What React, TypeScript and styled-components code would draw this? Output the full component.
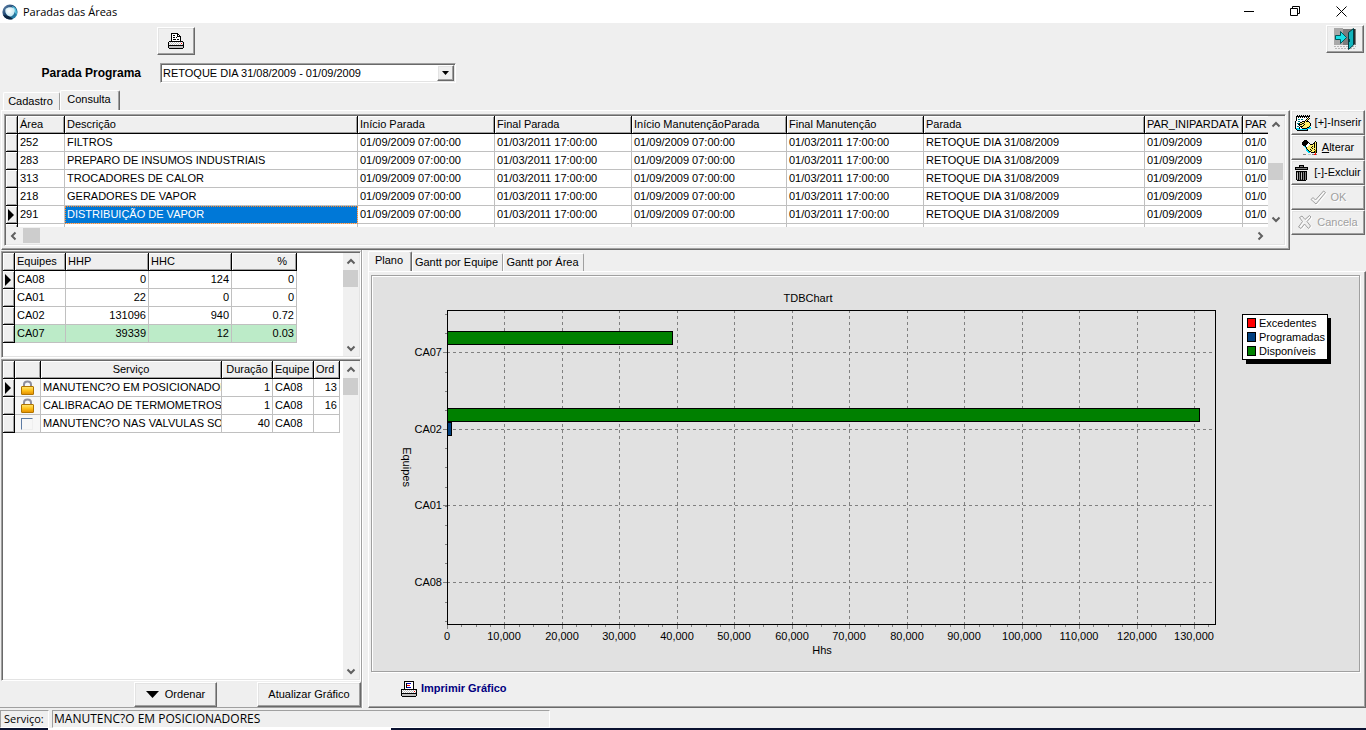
import React from "react";
import styled, { createGlobalStyle, css } from "styled-components";

const face = "#efefef";
const shade = "#a0a0a0";
const dark = "#696969";
const light = "#e3e3e3";
const line = "#c0c0c0";

const GlobalStyle = createGlobalStyle`
  * { box-sizing: border-box; }
  body {
    margin: 0;
    background: ${face};
    color: #000;
    font: 11px/13px "Liberation Sans", Arial, sans-serif;
  }
  button, select, input { font: inherit; color: inherit; margin: 0; padding: 0; }
  svg { flex: none; }
`;

const raised = css`
  border: 1px solid;
  border-color: #fff ${dark} ${dark} #fff;
  box-shadow: inset -1px -1px 0 ${shade}, inset 1px 1px 0 ${light};
`;

const sunken = css`
  border: 1px solid;
  border-color: ${shade} #fff #fff ${shade};
  box-shadow: inset 1px 1px 0 ${dark}, inset -1px -1px 0 ${light};
  padding: 1px;
`;

/* ---------- window frame ---------- */

const Window = styled.div`
  display: flex;
  flex-direction: column;
  min-height: 100vh;
  background: ${face};
`;

const TitleBar = styled.header`
  display: flex;
  align-items: center;
  height: 23px;
  padding: 0 2px;
  background: #fff;
`;

const Title = styled.h1`
  flex: 1;
  margin: 0 0 0 5px;
  font: 11px/16px "Open Sans", "Noto Sans", sans-serif;
`;

const CaptionButton = styled.button`
  display: flex;
  align-items: center;
  justify-content: center;
  width: 46px;
  height: 21px;
  border: 0;
  background: none;
`;

const Toolbar = styled.div`
  display: flex;
  justify-content: space-between;
  align-items: flex-start;
  height: 67px;
  padding: 2px 2px 0 0;
`;

const ProgramForm = styled.div`
  display: grid;
  grid-template-columns: 141px 299px;
  grid-template-rows: 28px 20px;
  column-gap: 16px;
  row-gap: 8px;
  align-items: center;
  padding-top: 2px;
`;

const ProgramLabel = styled.label`
  font-weight: bold;
  font-size: 12px;
  text-align: right;
  white-space: nowrap;
`;

const RaisedButton = styled.button<{ $w?: number; $gap?: number }>`
  ${raised}
  display: flex;
  align-items: center;
  justify-content: center;
  gap: ${(p) => p.$gap ?? 4}px;
  width: ${(p) => (p.$w ? `${p.$w}px` : "auto")};
  height: 25px;
  background: ${face};
  white-space: nowrap;
`;

const ToolButton = styled(RaisedButton)`
  grid-column: 2;
  width: 38px;
  height: 28px;
`;

const Combo = styled.div`
  ${sunken}
  position: relative;
  height: 20px;
  margin-left: 3px;
  background: #fff;
`;

const ComboSelect = styled.select`
  appearance: none;
  display: block;
  width: 100%;
  height: 16px;
  padding: 0 18px 0 1px;
  border: 0;
  background: transparent;
`;

const ComboArrow = styled.span`
  ${raised}
  position: absolute;
  top: 1px;
  right: 1px;
  display: flex;
  align-items: center;
  justify-content: center;
  width: 17px;
  height: 16px;
  background: ${face};
  pointer-events: none;
`;

/* ---------- tabs ---------- */

const TabStrip = styled.div<{ $left: number }>`
  display: flex;
  align-items: flex-end;
  padding-left: ${(p) => p.$left}px;
`;

const Tab = styled.button<{ $active?: boolean; $w: number }>`
  width: ${(p) => p.$w}px;
  height: ${(p) => (p.$active ? 20 : 18)}px;
  padding: 0 2px ${(p) => (p.$active ? 3 : 0)}px 0;
  border: 1px solid;
  border-color: #fff ${(p) => (p.$active ? dark : shade)} transparent #fff;
  border-bottom: 0;
  border-radius: 2px 2px 0 0;
  box-shadow: ${(p) => (p.$active ? `inset -1px 0 0 ${shade}` : "none")};
  background: ${face};
  white-space: nowrap;
`;

const TabPage = styled.section`
  display: flex;
  flex-direction: column;
  flex: 1;
  min-width: 0;
  border: 1px solid;
  border-color: #fff ${dark} ${dark} #fff;
  box-shadow: inset -1px -1px 0 ${shade};
  padding: 3px 3px 3px 2px;
`;

const UpperArea = styled.div`
  display: flex;
  align-items: flex-start;
  padding-left: 1px;
`;

const ActionColumn = styled.div`
  display: flex;
  flex-direction: column;
  flex: none;
  width: 76px;
  padding: 0 1px;
`;

const ActionButton = styled(RaisedButton)`
  width: 74px;
  &:disabled { color: ${shade}; text-shadow: 1px 1px 0 #fff; }
`;

/* ---------- data grids ---------- */

const GridBox = styled.div<{ $grow?: boolean; $h?: number; $hscroll?: boolean }>`
  ${sunken}
  display: grid;
  grid-template-columns: minmax(0, 1fr) 16px;
  grid-template-rows: minmax(0, 1fr) ${(p) => (p.$hscroll ? "17px" : "")};
  flex: ${(p) => (p.$grow ? 1 : "none")};
  height: ${(p) => (p.$h ? `${p.$h}px` : "auto")};
  background: #fff;
`;

const Viewport = styled.div`
  overflow: hidden;
`;

const Table = styled.table<{ $w: number }>`
  width: ${(p) => p.$w}px;
  table-layout: fixed;
  border-collapse: separate;
  border-spacing: 0;
`;

type Align = "left" | "right" | "center";

const HeadCell = styled.th<{ $align?: Align; $pad?: number }>`
  height: 18px;
  padding: 0 ${(p) => p.$pad ?? 2}px 0 2px;
  overflow: hidden;
  border-right: 1px solid #000;
  border-bottom: 1px solid #000;
  box-shadow: inset 1px 1px 0 #fff, inset -1px -1px 0 ${shade};
  background: ${face};
  font-weight: normal;
  text-align: ${(p) => p.$align ?? "left"};
  white-space: nowrap;
`;

const Cell = styled.td<{ $align?: Align; $tone?: string; $selected?: boolean }>`
  height: 18px;
  padding: 0 ${(p) => (p.$align === "right" ? 2 : 0)}px 0 2px;
  overflow: hidden;
  border-right: 1px solid ${line};
  border-bottom: 1px solid ${line};
  background: ${(p) => (p.$selected ? "#0078d7" : p.$tone ?? "#fff")};
  color: ${(p) => (p.$selected ? "#fff" : "#000")};
  outline: ${(p) => (p.$selected ? "1px dotted #ff8728" : "none")};
  outline-offset: -1px;
  text-align: ${(p) => p.$align ?? "left"};
  white-space: nowrap;
`;

const MarkerCell = styled.td`
  height: 18px;
  padding: 0 0 0 2px;
  border-right: 1px solid #000;
  border-bottom: 1px solid #000;
  box-shadow: inset 1px 1px 0 #fff, inset -1px -1px 0 ${shade};
  background: ${face};
  line-height: 0;
`;

const LockCell = styled(Cell)`
  line-height: 0;
  padding: 0 0 0 6px;
`;

const RowCheck = styled.input`
  appearance: none;
  display: block;
  width: 12px;
  height: 12px;
  border: 1px solid;
  border-color: #5d7ba3 ${face} ${face} #5d7ba3;
  background: #f7f7f7;
`;

const VScroll = styled.div`
  grid-column: 2;
  display: flex;
  flex-direction: column;
  justify-content: space-between;
  background: #f0f0f0;
`;

const HScroll = styled.div`
  grid-row: 2;
  display: flex;
  justify-content: space-between;
  background: #f0f0f0;
`;

const ScrollCorner = styled.div`
  grid-row: 2;
  background: #f0f0f0;
`;

const Track = styled.div<{ $start?: number; $row?: boolean }>`
  flex: 1;
  padding: ${(p) => (p.$row ? "1px" : `${p.$start ?? 0}px 0 0`)};
`;

const Thumb = styled.div<{ $row?: boolean }>`
  width: ${(p) => (p.$row ? "17px" : "15px")};
  height: ${(p) => (p.$row ? "15px" : "17px")};
  background: #cdcdcd;
`;

const ScrollButton = styled.button`
  display: flex;
  align-items: center;
  justify-content: center;
  width: 16px;
  height: 17px;
  border: 0;
  background: none;
`;

/* ---------- lower area ---------- */

const LowerArea = styled.main`
  display: flex;
  flex: 1;
  padding-bottom: 1px;
`;

const TeamPane = styled.div`
  display: flex;
  flex-direction: column;
  flex: none;
  gap: 1px;
  width: 362px;
  padding: 1px 0 0 1px;
  border-right: 1px solid ${shade};
  border-bottom: 1px solid ${shade};
`;

const PaneGrids = styled.div`
  display: flex;
  flex-direction: column;
  flex: 1;
  gap: 1px;
`;

const PaneButtons = styled.div`
  display: flex;
  justify-content: flex-end;
  gap: 40px;
`;

const ChartPane = styled.div`
  display: flex;
  flex-direction: column;
  flex: 1;
  min-width: 0;
  padding: 1px 0 0 5px;
  border-left: 1px solid #fff;
`;

const ChartFrame = styled.div`
  flex: 1;
  border: 1px solid ${shade};
  box-shadow: 1px 1px 0 #fff, inset 1px 1px 0 #fff;
  margin: 0 2px 1px 0;
  padding: 1px 0 0 1px;
  background: #e1e1e1;
`;

const ChartSvg = styled.svg`
  display: block;
  width: 100%;
  height: auto;
  font: 11px "Liberation Sans", Arial, sans-serif;
`;

const ChartFooter = styled.div`
  display: flex;
  align-items: center;
  height: 31px;
  padding-left: 30px;
`;

const LinkButton = styled.button`
  display: flex;
  align-items: center;
  gap: 4px;
  border: 0;
  background: none;
  color: #000080;
  font-weight: bold;
`;

const StatusBar = styled.footer`
  display: flex;
  gap: 3px;
  padding-top: 1px;
`;

const StatusCell = styled.div<{ $w: number; $size: number }>`
  width: ${(p) => p.$w}px;
  height: 18px;
  padding: 0 1px 0 ${(p) => (p.$size === 12 ? 1 : 3)}px;
  border: 1px solid;
  border-color: ${shade} #fff #fff ${shade};
  font: ${(p) => p.$size}px/16px "Open Sans", "Noto Sans", sans-serif;
  white-space: nowrap;
`;

const BottomEdge = styled.div`
  height: 2px;
  background: linear-gradient(to right, #0a1230 48px, #fff 48px, #fff 391px, #0a1230 391px);
`;

/* ---------- icons ---------- */

const palette: Record<string, string> = {
  k: "#000000",
  w: "#ffffff",
  g: "#c0c0c0",
  d: "#808080",
  r: "#ff0000",
  b: "#0000c0",
  c: "#00e0ff",
  t: "#008080",
  y: "#ffee66",
  o: "#a08000",
};

function Sprite({ rows }: { rows: string[] }) {
  const w = Math.max(...rows.map((r) => r.length));
  return (
    <svg width={w} height={rows.length} viewBox={`0 0 ${w} ${rows.length}`} shapeRendering="crispEdges" aria-hidden="true">
      {rows.flatMap((row, y) =>
        [...row].map((ch, x) =>
          palette[ch] ? <rect key={`${x}-${y}`} x={x} y={y} width={1} height={1} fill={palette[ch]} /> : null
        )
      )}
    </svg>
  );
}

const printerRows = [
  "   kkkkkkk      ",
  "   kwwwwwkk     ",
  "   kwkkwwkwk    ",
  "   kwwwwwkkkk   ",
  "   kwkkwkwwwk   ",
  "   kwwwwwwwwk   ",
  "   kwkkkwkkwk   ",
  "   kwwwwwwwwk   ",
  " kkkkkkkkkkkkkk ",
  "kwgwgwgwgwgwgwgk",
  "kgwgwgwgwgwgwrwk",
  "kwgwgwgwgwgwgwgk",
  "kkkkkkkkkkkkkkkk",
  "kggggggggggggggk",
  "kggggggggggggggk",
  " kkkkkkkkkkkkkk ",
];

const chartPrinterRows = [
  "   kkkkkkkkkk   ",
  "   kwwwwwwwwk   ",
  "   kwkbbbbwwk   ",
  "   kwkwwwwwwk   ",
  "   kwkrrrwwwk   ",
  "   kwkwwwwwwk   ",
  "   kwkbbbbwwk   ",
  "   kwwwwwwwwk   ",
  "kkkkkkkkkkkkkkkk",
  "kwgwgwgwgwgwgwgk",
  "kgwgwgwgwgwgwrwk",
  "kwgwgwgwgwgwgwgk",
  "kkkkkkkkkkkkkkkk",
  "kggggggggggggggk",
  "kggggggggggggggk",
  " kkkkkkkkkkkkkk ",
];

const insertRows = [
  "  k k k k k k k ",
  " kkkkkkkkkkkkkk ",
  " kwkwkwkwkwkwkw ",
  " kwwwwwwwwwwkyk ",
  " kwttwttwwwkyk  ",
  " kwwwwwwwwkykw  ",
  "kwwttwwkkkykkk  ",
  "kwwwwkkyykyyyyk ",
  "kwttkyykkyyyyyyk",
  "kwwkkkkyykyyyyyk",
  "kwwwkyyykyyyyyyk",
  "kwttwkkkyyyyyyk ",
  "kwwwkwkyyyyykkcc",
  "kccckwwkkkkkcccc",
  " kcccccccccck   ",
  "  kkkkkkkkkkk   ",
];

const editRows = [
  "  kkk           ",
  " kkkkk       k  ",
  "kkkkkkk     kyk ",
  "kkkkkkwk   kkyk ",
  "kkkkkwwwkkkykyk ",
  " kkkwwwyyyyykyk ",
  "  ckwwyyyykykyk ",
  "   ckyyyykyykyk ",
  "    kyyyyykyyyk ",
  "    ckyykyyykyk ",
  "    cckyykyyyok ",
  "     cckkyyykok ",
  "      cc kkkkok ",
  "             r  ",
  " ddd  ggg ddrrd ",
];

const trashRows = [
  "    kkkkk    ",
  "    kdddk    ",
  "kkkkkkkkkkkkk",
  "kdddddddddddk",
  "kkkkkkkkkkkkk",
  "             ",
  " kkkkkkkkkkk ",
  " kdkdkdkdkdk ",
  " kgkdkgkdkdk ",
  " kgkdkgkdkdk ",
  " kgkdkgkdkdk ",
  " kgkdkgkdkdk ",
  " kgkdkgkdkdk ",
  " kgkdkgkdkdk ",
  " kdkdkdkdkdk ",
  "  kkkkkkkkk  ",
];

function LogoIcon() {
  return (
    <svg width="16" height="16" viewBox="0 0 16 16" aria-hidden="true">
      <defs>
        <linearGradient id="ring" x1="0" y1="0" x2="1" y2="1">
          <stop offset="0" stopColor="#6f8fb4" />
          <stop offset="0.45" stopColor="#1a4470" />
          <stop offset="1" stopColor="#2a9fc4" />
        </linearGradient>
        <radialGradient id="core" cx="0.4" cy="0.4" r="0.7">
          <stop offset="0" stopColor="#ffffff" />
          <stop offset="1" stopColor="#b5e3f0" />
        </radialGradient>
      </defs>
      <circle cx="8" cy="8" r="7.6" fill="url(#ring)" />
      <path d="M1 11 C3 15 8 16.500 11 15 L7 12 Z" fill="#0c2440" />
      <path d="M10 2 C14 3 15.500 7 14.500 11 L12 7 Z" fill="#54c0dd" />
      <path d="M3.500 5 C6 2.500 11 3 12.500 5 C13.500 8 11.500 12 8.500 12.500 C5 12 2.500 9 3.500 5 Z" fill="url(#core)" />
    </svg>
  );
}

function ExitIcon() {
  return (
    <svg width="23" height="22" viewBox="0 0 23 22" aria-hidden="true">
      <rect x="0" y="0" width="9" height="17" fill="#a8a8a8" />
      <rect x="9" y="1" width="13" height="16" fill="#7c7c7c" />
      <path d="M0 18.500h22M1 20.500h20" stroke="#b8b8b8" strokeDasharray="2 1" />
      <path d="M1.500 7.500h5V3.500l6 6-6 6v-4h-5z" fill="#19e0e6" stroke="#00585c" />
      <path d="M14.500 4.500 19.500 0.500V17L14.500 21.500Z" fill="#12b4bc" stroke="#003c40" />
      <path d="M20.500 1v15" stroke="#2c2c2c" />
      <path d="M15.500 11v3" stroke="#004c50" />
    </svg>
  );
}

function CheckIcon() {
  return (
    <svg width="17" height="16" viewBox="0 0 17 16" fill="none" aria-hidden="true">
      <path d="M2 10.500 4 8.500 6.500 11 14.500 2 16.500 3.500 7 15Z" stroke="#fff" />
      <path d="M1 9.500 3 7.500 5.500 10 13.500 1 15.500 2.500 6 14Z" stroke="#a0a0a0" />
    </svg>
  );
}

function CrossIcon() {
  const d = "M1.500 2.500 4 1 7 4.500 11.500 0.500 13 2 9 6.500 12.500 11 10.500 13.500 6.500 9 3 13.500 0.500 12 4.500 6.500Z";
  return (
    <svg width="15" height="15" viewBox="0 0 15 15" fill="none" aria-hidden="true">
      <path d={d} stroke="#fff" transform="translate(1 1)" />
      <path d={d} stroke="#a0a0a0" />
    </svg>
  );
}

function LockIcon() {
  return (
    <svg width="13" height="15" viewBox="0 0 13 15" aria-hidden="true">
      <defs>
        <linearGradient id="gold" x1="0" y1="0" x2="0" y2="1">
          <stop offset="0" stopColor="#ffe878" />
          <stop offset="0.5" stopColor="#ffc21a" />
          <stop offset="1" stopColor="#e08a00" />
        </linearGradient>
      </defs>
      <path d="M3 7V4.500C3 0.500 10 0.500 10 4.500V7" fill="none" stroke="#8f8f9c" strokeWidth="2" />
      <rect x="0.500" y="6.500" width="12" height="8" rx="0.500" fill="url(#gold)" stroke="#b07400" />
    </svg>
  );
}

const chevrons = {
  up: "M1.500 6.500 5 3 8.500 6.500",
  down: "M1.500 3.500 5 7 8.500 3.500",
  left: "M6.500 1.500 3 5 6.500 8.500",
  right: "M3.500 1.500 7 5 3.500 8.500",
};

function ScrollArrow({ dir }: { dir: keyof typeof chevrons }) {
  return (
    <ScrollButton aria-label={dir}>
      <svg width="10" height="10" viewBox="0 0 10 10" fill="none" stroke="#606060" strokeWidth="2" aria-hidden="true">
        <path d={chevrons[dir]} />
      </svg>
    </ScrollButton>
  );
}

function RowMarker() {
  return (
    <svg width="7" height="12" viewBox="0 0 7 12" aria-hidden="true">
      <path d="M0 0 6 6 0 12Z" />
    </svg>
  );
}

function Scrollbar({ start }: { start?: number }) {
  return (
    <VScroll>
      <ScrollArrow dir="up" />
      <Track $start={start}>
        <Thumb />
      </Track>
      <ScrollArrow dir="down" />
    </VScroll>
  );
}

/* ---------- data ---------- */

const areaColumns = [
  { title: "Área", w: 47 },
  { title: "Descrição", w: 293 },
  { title: "Início Parada", w: 137 },
  { title: "Final Parada", w: 137 },
  { title: "Início ManutençãoParada", w: 155 },
  { title: "Final Manutenção", w: 137 },
  { title: "Parada", w: 221 },
  { title: "PAR_INIPARDATA", w: 98 },
  { title: "PAR", w: 98 },
];

const areas: [string, string][] = [
  ["252", "FILTROS"],
  ["283", "PREPARO DE INSUMOS INDUSTRIAIS"],
  ["313", "TROCADORES DE CALOR"],
  ["218", "GERADORES DE VAPOR"],
  ["291", "DISTRIBUIÇÃO DE VAPOR"],
];

const start = "01/09/2009 07:00:00";
const end = "01/03/2011 17:00:00";

const teams = [
  { id: "CA08", hhp: "0", hhc: "124", pct: "0" },
  { id: "CA01", hhp: "22", hhc: "0", pct: "0" },
  { id: "CA02", hhp: "131096", hhc: "940", pct: "0.72" },
  { id: "CA07", hhp: "39339", hhc: "12", pct: "0.03", tone: "#bcebc8" },
];

const services = [
  { name: "MANUTENC?O EM POSICIONADOR", time: "1", team: "CA08", ord: "13", locked: true },
  { name: "CALIBRACAO DE TERMOMETROS I", time: "1", team: "CA08", ord: "16", locked: true },
  { name: "MANUTENC?O NAS VALVULAS SOI", time: "40", team: "CA08", ord: "", locked: false },
];

function AreaGrid() {
  return (
    <GridBox $h={132} $hscroll>
      <Viewport>
        <Table $w={12 + areaColumns.reduce((s, c) => s + c.w, 0)}>
          <colgroup>
            <col style={{ width: 12 }} />
            {areaColumns.map((c) => (
              <col key={c.title} style={{ width: c.w }} />
            ))}
          </colgroup>
          <thead>
            <tr>
              <HeadCell />
              {areaColumns.map((c) => (
                <HeadCell key={c.title}>{c.title}</HeadCell>
              ))}
            </tr>
          </thead>
          <tbody>
            {areas.map(([id, name]) => (
              <tr key={id}>
                <MarkerCell>{id === "291" && <RowMarker />}</MarkerCell>
                <Cell>{id}</Cell>
                <Cell $selected={id === "291"}>{name}</Cell>
                <Cell>{start}</Cell>
                <Cell>{end}</Cell>
                <Cell>{start}</Cell>
                <Cell>{end}</Cell>
                <Cell>RETOQUE DIA 31/08/2009</Cell>
                <Cell>01/09/2009</Cell>
                <Cell>01/0</Cell>
              </tr>
            ))}
            <tr>
              <MarkerCell />
              {areaColumns.map((c) => (
                <Cell key={c.title} />
              ))}
            </tr>
          </tbody>
        </Table>
      </Viewport>
      <Scrollbar start={30} />
      <HScroll>
        <ScrollArrow dir="left" />
        <Track $row>
          <Thumb $row />
        </Track>
        <ScrollArrow dir="right" />
      </HScroll>
      <ScrollCorner />
    </GridBox>
  );
}

function TeamGrid() {
  return (
    <GridBox $h={107}>
      <Viewport>
        <Table $w={294}>
          <colgroup>
            {[12, 51, 83, 83, 65].map((w, i) => (
              <col key={i} style={{ width: w }} />
            ))}
          </colgroup>
          <thead>
            <tr>
              <HeadCell />
              <HeadCell>Equipes</HeadCell>
              <HeadCell>HHP</HeadCell>
              <HeadCell>HHC</HeadCell>
              <HeadCell $align="right" $pad={9}>%</HeadCell>
            </tr>
          </thead>
          <tbody>
            {teams.map((t, i) => (
              <tr key={t.id}>
                <MarkerCell>{i === 0 && <RowMarker />}</MarkerCell>
                <Cell $tone={t.tone}>{t.id}</Cell>
                <Cell $tone={t.tone} $align="right">{t.hhp}</Cell>
                <Cell $tone={t.tone} $align="right">{t.hhc}</Cell>
                <Cell $tone={t.tone} $align="right">{t.pct}</Cell>
              </tr>
            ))}
          </tbody>
        </Table>
      </Viewport>
      <Scrollbar />
    </GridBox>
  );
}

function ServiceGrid() {
  return (
    <GridBox $grow>
      <Viewport>
        <Table $w={337}>
          <colgroup>
            {[12, 26, 181, 51, 41, 26].map((w, i) => (
              <col key={i} style={{ width: w }} />
            ))}
          </colgroup>
          <thead>
            <tr>
              <HeadCell />
              <HeadCell />
              <HeadCell $align="center">Serviço</HeadCell>
              <HeadCell $align="center">Duração</HeadCell>
              <HeadCell>Equipe</HeadCell>
              <HeadCell>Ord</HeadCell>
            </tr>
          </thead>
          <tbody>
            {services.map((s, i) => (
              <tr key={s.name}>
                <MarkerCell>{i === 0 && <RowMarker />}</MarkerCell>
                <LockCell $tone="#f7f7f7">
                  {s.locked ? <LockIcon /> : <RowCheck type="checkbox" aria-label={s.name} />}
                </LockCell>
                <Cell>{s.name}</Cell>
                <Cell $align="right">{s.time}</Cell>
                <Cell>{s.team}</Cell>
                <Cell $align="right">{s.ord}</Cell>
              </tr>
            ))}
          </tbody>
        </Table>
      </Viewport>
      <Scrollbar />
    </GridBox>
  );
}

/* ---------- chart ---------- */

const plot = { x: 74, y: 33, w: 769, h: 314 };
const xAt = (v: number) => plot.x + Math.round((v * 747) / 130000);
const chartRows = [
  { id: "CA07", y: 75, available: 39339, planned: 0 },
  { id: "CA02", y: 152, available: 131096, planned: 940 },
  { id: "CA01", y: 228, available: 0, planned: 0 },
  { id: "CA08", y: 305, available: 0, planned: 0 },
];
const legend = [
  { label: "Excedentes", color: "#ff0000" },
  { label: "Programadas", color: "#004080" },
  { label: "Disponíveis", color: "#008000" },
];

function TeamChart() {
  const major = Array.from({ length: 14 }, (_, i) => i * 10000);
  const minor = Array.from({ length: 54 }, (_, i) => i * 2500).filter((v) => v % 10000);
  const yMinor = Array.from({ length: 17 }, (_, i) => 37 + Math.round(i * 19.17));
  const bottom = plot.y + plot.h;
  return (
    <ChartSvg viewBox="0 0 986 394" role="img" aria-label="TDBChart">
      <g shapeRendering="crispEdges" stroke="#808080" fill="none">
        {major.slice(1).map((v) => (
          <path key={v} d={`M${xAt(v) + 0.5} ${plot.y}V${bottom}`} strokeDasharray="3 3" />
        ))}
        {chartRows.map((r) => (
          <path key={r.id} d={`M${plot.x} ${r.y + 0.5}H${plot.x + plot.w - 3}`} strokeDasharray="3 3" />
        ))}
        {major.map((v) => (
          <path key={v} d={`M${xAt(v) + 0.5} ${bottom}v5`} />
        ))}
        {minor.map((v) => (
          <path key={v} d={`M${xAt(v) + 0.5} ${bottom}v3`} />
        ))}
        {yMinor.map((y) => (
          <path key={y} d={`M${plot.x} ${y + 0.5}h-2`} />
        ))}
        {chartRows.map((r) => (
          <path key={r.id} d={`M${plot.x} ${r.y + 0.5}h-4`} />
        ))}
      </g>
      <g shapeRendering="crispEdges" stroke="#000">
        <rect x={plot.x + 0.5} y={plot.y + 0.5} width={plot.w - 1} height={plot.h} fill="none" />
        {chartRows.map((r) => (
          <g key={r.id}>
            {r.available > 0 && (
              <rect x={plot.x + 0.5} y={r.y - 20.5} width={xAt(r.available) - plot.x - 1} height={13} fill="#008000" />
            )}
            {r.planned > 0 && (
              <rect x={plot.x + 0.5} y={r.y - 6.5} width={xAt(r.planned) - plot.x - 1} height={13} fill="#004080" />
            )}
          </g>
        ))}
      </g>
      <g textAnchor="middle">
        <text x={435} y={25}>TDBChart</text>
        {major.map((v) => (
          <text key={v} x={xAt(v)} y={363}>{v.toLocaleString("en-US")}</text>
        ))}
        <text x={449} y={377}>Hhs</text>
        <text transform="translate(30 190) rotate(90)">Equipes</text>
      </g>
      <g textAnchor="end">
        {chartRows.map((r) => (
          <text key={r.id} x={69} y={r.y + 4}>{r.id}</text>
        ))}
      </g>
      <rect x={873} y={41} width={85} height={46} />
      <rect x={869.5} y={37.5} width={85} height={45} fill="#fff" stroke="#000" />
      {legend.map((l, i) => (
        <g key={l.label}>
          <rect x={874.5} y={41.5 + i * 14} width={8} height={9} fill={l.color} stroke="#000" />
          <text x={886} y={50 + i * 14}>{l.label}</text>
        </g>
      ))}
    </ChartSvg>
  );
}

/* ---------- page ---------- */

export default function App() {
  return (
    <Window>
      <GlobalStyle />
      <TitleBar>
        <LogoIcon />
        <Title>Paradas das Áreas</Title>
        <CaptionButton aria-label="Minimizar">
          <svg width="11" height="11" aria-hidden="true"><path d="M0 5.500h10" stroke="#000" /></svg>
        </CaptionButton>
        <CaptionButton aria-label="Restaurar">
          <svg width="11" height="11" fill="none" stroke="#000" aria-hidden="true">
            <path d="M0.500 2.500h7v7h-7zM2.500 2V0.500h7v7H8" />
          </svg>
        </CaptionButton>
        <CaptionButton aria-label="Fechar">
          <svg width="11" height="11" stroke="#000" aria-hidden="true"><path d="M0.500 0.500l10 10M10.500 0.500l-10 10" /></svg>
        </CaptionButton>
      </TitleBar>

      <Toolbar>
        <ProgramForm>
          <ToolButton aria-label="Imprimir">
            <Sprite rows={printerRows} />
          </ToolButton>
          <ProgramLabel htmlFor="parada">Parada Programa</ProgramLabel>
          <Combo>
            <ComboSelect id="parada">
              <option>RETOQUE DIA 31/08/2009 - 01/09/2009</option>
            </ComboSelect>
            <ComboArrow>
              <svg width="7" height="4" aria-hidden="true"><path d="M0 0h7L3.500 4Z" /></svg>
            </ComboArrow>
          </Combo>
        </ProgramForm>
        <ToolButton aria-label="Sair">
          <ExitIcon />
        </ToolButton>
      </Toolbar>

      <TabStrip $left={3}>
        <Tab $w={57}>Cadastro</Tab>
        <Tab $w={60} $active>Consulta</Tab>
      </TabStrip>

      <UpperArea>
        <TabPage>
          <AreaGrid />
        </TabPage>
        <ActionColumn>
          <ActionButton><Sprite rows={insertRows} />[+]-Inserir</ActionButton>
          <ActionButton><Sprite rows={editRows} /><span><u>A</u>lterar</span></ActionButton>
          <ActionButton $gap={6}><Sprite rows={trashRows} />[-]-Excluir</ActionButton>
          <ActionButton disabled><CheckIcon />OK</ActionButton>
          <ActionButton disabled><CrossIcon />Cancela</ActionButton>
        </ActionColumn>
      </UpperArea>

      <LowerArea>
        <TeamPane>
          <PaneGrids>
            <TeamGrid />
            <ServiceGrid />
          </PaneGrids>
          <PaneButtons>
            <RaisedButton $w={83} $gap={6}>
              <svg width="13" height="8" aria-hidden="true"><path d="M0 0h13L6.500 7Z" /></svg>
              Ordenar
            </RaisedButton>
            <RaisedButton $w={104}>Atualizar Gráfico</RaisedButton>
          </PaneButtons>
        </TeamPane>
        <ChartPane>
          <TabStrip $left={0}>
            <Tab $w={44} $active>Plano</Tab>
            <Tab $w={91}>Gantt por Equipe</Tab>
            <Tab $w={81}>Gantt por Área</Tab>
          </TabStrip>
          <TabPage>
            <ChartFrame>
              <TeamChart />
            </ChartFrame>
            <ChartFooter>
              <LinkButton>
                <Sprite rows={chartPrinterRows} />
                Imprimir Gráfico
              </LinkButton>
            </ChartFooter>
          </TabPage>
        </ChartPane>
      </LowerArea>

      <StatusBar>
        <StatusCell $w={49} $size={11}>Serviço:</StatusCell>
        <StatusCell $w={498} $size={12}>MANUTENC?O EM POSICIONADORES</StatusCell>
      </StatusBar>
      <BottomEdge />
    </Window>
  );
}
